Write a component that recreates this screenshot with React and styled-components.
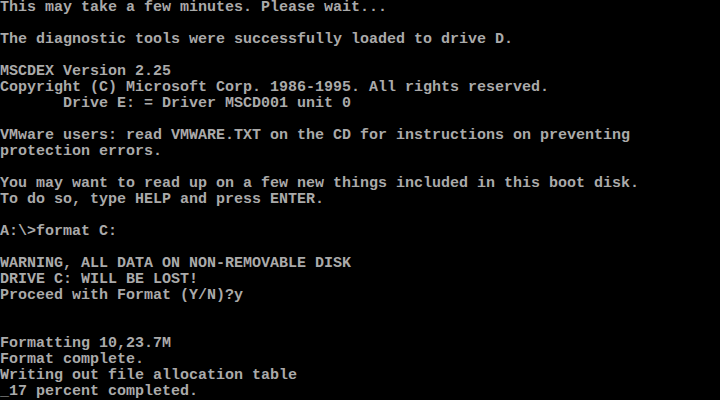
import React from 'react';
import styled, { createGlobalStyle } from 'styled-components';

const GlobalStyle = createGlobalStyle`
  html, body {
    margin: 0;
    padding: 0;
    background: #000;
  }
`;

const Screen = styled.div`
  width: 720px;
  height: 400px;
  background: #000;
  overflow: hidden;
  display: flex;
  flex-direction: column;
`;

// one 80-column text row: 9px cells, 16px rows
const Line = styled.div`
  height: 16px;
  line-height: 16px;
  font-family: "Liberation Mono", "DejaVu Sans Mono", monospace;
  font-size: 15px;
  font-weight: bold;
  color: #aaaaaa;
  white-space: pre;
`;

const lines = [
  "This may take a few minutes. Please wait...",
  "",
  "The diagnostic tools were successfully loaded to drive D.",
  "",
  "MSCDEX Version 2.25",
  "Copyright (C) Microsoft Corp. 1986-1995. All rights reserved.",
  "       Drive E: = Driver MSCD001 unit 0",
  "",
  "VMware users: read VMWARE.TXT on the CD for instructions on preventing",
  "protection errors.",
  "",
  "You may want to read up on a few new things included in this boot disk.",
  "To do so, type HELP and press ENTER.",
  "",
  "A:\\>format C:",
  "",
  "WARNING, ALL DATA ON NON-REMOVABLE DISK",
  "DRIVE C: WILL BE LOST!",
  "Proceed with Format (Y/N)?y",
  "",
  "",
  "Formatting 10,23.7M",
  "Format complete.",
  "Writing out file allocation table",
  "_17 percent completed.",
];

export default function App() {
  return (
    <>
      <GlobalStyle />
      <Screen>
        {lines.map((text, i) => (
          <Line key={i}>{text}</Line>
        ))}
      </Screen>
    </>
  );
}
